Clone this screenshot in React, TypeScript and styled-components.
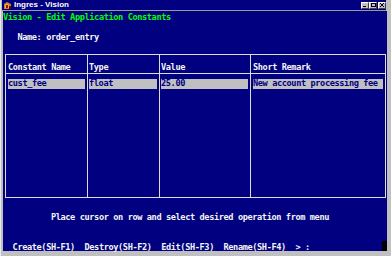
import React from 'react';
import styled, { createGlobalStyle } from 'styled-components';

const GlobalStyle = createGlobalStyle`
  html, body {
    margin: 0;
    padding: 0;
    background: #c0c0c0;
  }
  body {
    width: 391px;
    height: 256px;
    overflow: hidden;
  }
`;

const Window = styled.div`
  width: 391px;
  height: 256px;
  box-sizing: border-box;
  background: #c0c0c0;
  border-left: 1px solid #e8e8e8;
  padding: 0 5px 5px 1px;
  display: flex;
  flex-direction: column;
`;

const TitleBar = styled.div`
  height: 10px;
  background: #000080;
  display: flex;
  align-items: center;
  border-bottom: 1px solid #9a9a9a;
`;

const TitleText = styled.span`
  margin-left: 2px;
  font-family: 'Liberation Sans', Arial, sans-serif;
  font-weight: bold;
  font-size: 8px;
  line-height: 10px;
  color: #ffffff;
`;

const Controls = styled.div`
  margin-left: auto;
  display: flex;
  align-items: center;
  height: 7px;
`;

const CtlButton = styled.div<{ $gap?: boolean }>`
  width: 8px;
  height: 7px;
  box-sizing: border-box;
  background: #c0c0c0;
  border-top: 1px solid #ffffff;
  border-left: 1px solid #ffffff;
  border-right: 1px solid #404040;
  border-bottom: 1px solid #404040;
  margin-left: ${(p) => (p.$gap ? '1px' : '0')};
  display: flex;
  align-items: center;
  justify-content: center;
`;

const Screen = styled.div`
  width: 384px;
  height: 240px;
  margin-left: 1px;
  background: #000080;
  color: #f4f4f4;
  font-family: 'DejaVu Sans Mono', 'Liberation Mono', monospace;
  font-weight: bold;
  font-size: 8.6px;
  letter-spacing: -0.38px;
  display: flex;
  flex-direction: column;
`;

const Line = styled.div<{ $color?: string }>`
  height: 10px;
  box-sizing: border-box;
  padding-top: 1px;
  line-height: 10px;
  white-space: pre;
  color: ${(p) => p.$color || 'inherit'};
`;

const MenuLine = styled(Line)`
  display: flex;
`;

const Cursor = styled.span`
  margin-left: auto;
  margin-top: -1px;
  width: 5px;
  height: 10px;
  background: #000000;
`;

const Table = styled.div`
  margin: 3px 0 0 2px;
  width: 381px;
  box-sizing: border-box;
  border: 1px solid #dcdcdc;
  display: grid;
  grid-template-columns: 81px 72px 91px 135px;
  grid-template-rows: 19px 123px;
`;

const HeadCell = styled.div<{ $first?: boolean; $pad: number }>`
  box-sizing: border-box;
  border-left: ${(p) => (p.$first ? 'none' : '1px solid #dcdcdc')};
  border-bottom: 1px solid #dcdcdc;
  padding: 6px 0 0 ${(p) => p.$pad}px;
`;

const BodyCell = styled.div<{ $first?: boolean; $pad: number }>`
  box-sizing: border-box;
  border-left: ${(p) => (p.$first ? 'none' : '1px solid #dcdcdc')};
  padding: 5px 0 0 ${(p) => p.$pad}px;
`;

const Field = styled.div<{ $w: number }>`
  width: ${(p) => p.$w}px;
  height: 10px;
  background: #c0c0c0;
  color: #000080;
  line-height: 9px;
  white-space: pre;
  overflow: hidden;
`;

const Footer = styled.div`
  margin-top: auto;
`;

const columns = [
  { head: 'Constant Name', value: 'cust_fee', pad: 2, w: 77 },
  { head: 'Type', value: 'float', pad: 1, w: 68 },
  { head: 'Value', value: '25.00', pad: 1, w: 87 },
  { head: 'Short Remark', value: 'New account processing fee', pad: 2, w: 130 },
];

const AppIcon = () => (
  <svg width="9" height="9" viewBox="0 0 9 9" style={{ marginLeft: 1, flexShrink: 0 }}>
    <path d="M1 8 L1 3 L4 1 L8 3 L8 8 Z" fill="#c08040" />
    <path d="M2 7 L2 4 L4 2.5 L6 4 L6 7 Z" fill="#e0c000" />
    <rect x="3" y="4" width="2" height="3" fill="#c00000" />
    <rect x="6" y="5" width="2" height="3" fill="#800000" />
  </svg>
);

const App = () => {
  return (
    <>
      <GlobalStyle />
      <Window>
        <TitleBar>
          <AppIcon />
          <TitleText>Ingres - Vision</TitleText>
          <Controls>
            <CtlButton>
              <svg width="4" height="3" viewBox="0 0 4 3">
                <rect x="0" y="2" width="3" height="1" fill="#000" />
              </svg>
            </CtlButton>
            <CtlButton>
              <svg width="5" height="4" viewBox="0 0 5 4">
                <rect x="0.5" y="0.5" width="4" height="3" fill="none" stroke="#000" strokeWidth="1" />
                <rect x="0" y="0" width="5" height="1" fill="#000" />
              </svg>
            </CtlButton>
            <CtlButton $gap>
              <svg width="4" height="4" viewBox="0 0 4 4">
                <path d="M0 0 L4 4 M4 0 L0 4" stroke="#000" strokeWidth="1" />
              </svg>
            </CtlButton>
          </Controls>
        </TitleBar>
        <Screen>
          <Line $color="#00ff00">Vision - Edit Application Constants</Line>
          <Line> </Line>
          <Line>   Name: order_entry</Line>
          <Line> </Line>
          <Table>
            {columns.map((c, i) => (
              <HeadCell key={'h' + i} $first={i === 0} $pad={c.pad}>
                <Line>{c.head}</Line>
              </HeadCell>
            ))}
            {columns.map((c, i) => (
              <BodyCell key={'b' + i} $first={i === 0} $pad={c.pad}>
                <Field $w={c.w}>{c.value}</Field>
              </BodyCell>
            ))}
          </Table>
          <Footer>
            <Line>          Place cursor on row and select desired operation from menu</Line>
            <Line> </Line>
            <Line> </Line>
            <MenuLine>
              <span>  Create(SH-F1)  Destroy(SH-F2)  Edit(SH-F3)  Rename(SH-F4)  &gt; :</span>
              <Cursor />
            </MenuLine>
          </Footer>
        </Screen>
      </Window>
    </>
  );
};

export default App;
